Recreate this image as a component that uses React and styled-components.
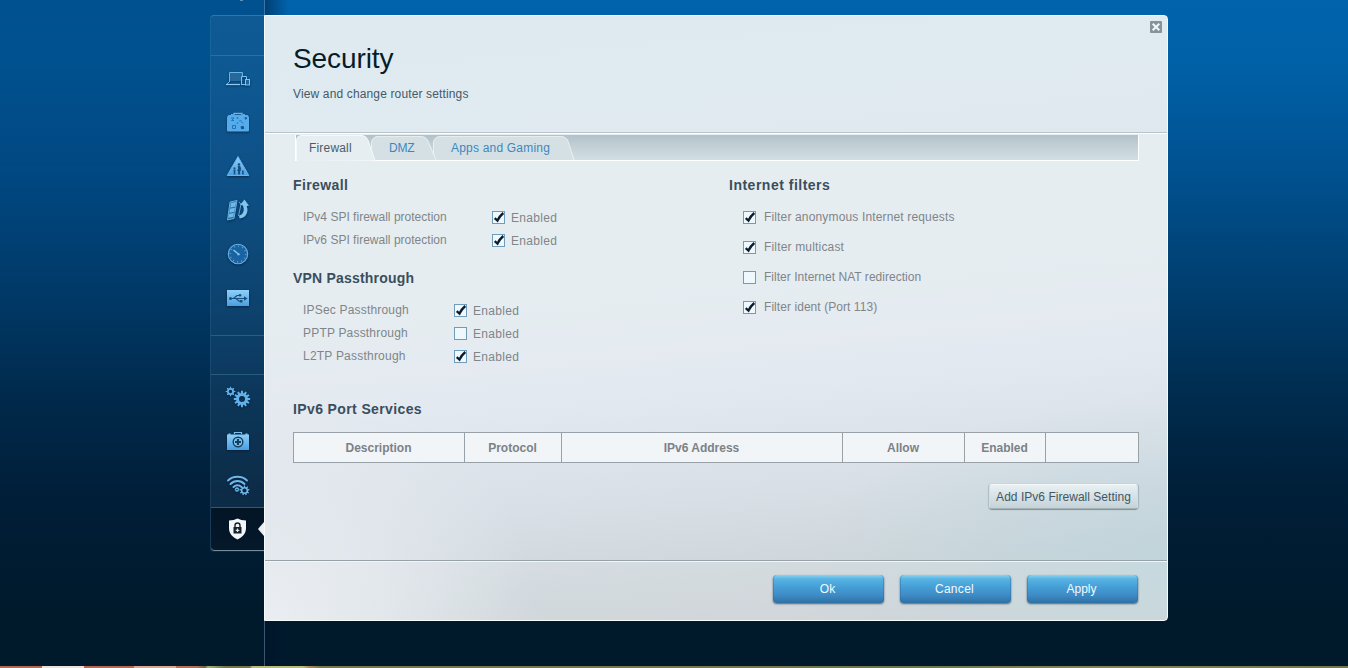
import React from "react";
import styled, { createGlobalStyle } from "styled-components";

const GlobalStyle = createGlobalStyle`
  * { box-sizing: border-box; }
  html, body { margin: 0; padding: 0; overflow: hidden; }
  body { font: 12px/16px "Liberation Sans", Arial, sans-serif; color: #808588; }
  button { font: inherit; padding: 0; margin: 0; }
  h1, h2, p { margin: 0; }
`;

const Page = styled.div`
  width: 1348px;
  height: 668px;
  display: flex;
  flex-direction: column;
  background: linear-gradient(#0063ac 0, #0061a8 60px, #00508e 180px, #003e6e 290px, #002b4d 400px, #001f39 490px, #001a2d 600px, #001a2c 668px);
`;

const Main = styled.div`
  flex: 1;
  display: flex;
  align-items: flex-start;
`;

const LeftRail = styled.aside`
  position: relative;
  flex: none;
  width: 265px;
  height: 666px;
  padding: 15px 0 0 210px;
  border-right: 1px solid rgba(130, 160, 190, 0.45);
  background: linear-gradient(rgba(0, 40, 80, 0.3), rgba(0, 40, 80, 0.22) 180px, rgba(0, 30, 60, 0.12) 400px, rgba(0, 0, 0, 0) 560px);
`;

const Notch = styled.span`
  position: absolute;
  left: 240px;
  top: 0;
  width: 3px;
  height: 1px;
  background: #5a93bd;
`;

const Nav = styled.nav`
  width: 54px;
  height: 537px;
  border-left: 1px solid rgba(120, 170, 210, 0.13);
  border-top: 1px solid rgba(110, 170, 215, 0.4);
  border-radius: 4px 0 0 4px;
  background: linear-gradient(rgba(70, 125, 165, 0.2), rgba(60, 110, 150, 0.2) 350px, rgba(50, 90, 120, 0.22));
`;

const NavBlank = styled.div`
  height: ${(p) => p.$height}px;
`;

const NavGroup = styled.div`
  height: ${(p) => p.$height}px;
  border-top: 1px solid rgba(110, 165, 205, 0.3);
  border-bottom: ${(p) => (p.$ruled ? "1px solid rgba(110, 165, 205, 0.3)" : "0")};
`;

const NavItem = styled.div`
  position: relative;
  height: 44px;
  display: flex;
  align-items: center;
  justify-content: center;
  svg { display: block; filter: drop-shadow(0 1px 1px rgba(0, 15, 35, 0.55)); }
`;

const ActiveItem = styled(NavItem)`
  border-top: 1px solid rgba(130, 160, 180, 0.45);
  border-bottom: 1px solid #7b8c99;
  border-radius: 0 0 0 4px;
  background: linear-gradient(rgba(0, 12, 24, 0.7), rgba(0, 12, 24, 0.55));
`;

const Pointer = styled.span`
  position: absolute;
  right: 0;
  top: 14px;
  border: 7px solid transparent;
  border-left-width: 0;
  border-right: 6px solid #edf1f4;
`;

const Stage = styled.div`
  position: relative;
  flex: 1;
  height: 666px;
  margin-left: -1px;
  padding-top: 15px;
  background: linear-gradient(90deg, transparent 1px, rgba(0, 15, 40, 0.42) 1px, rgba(0, 15, 40, 0) 24px);
`;

const Panel = styled.section`
  width: 904px;
  height: 606px;
  display: flex;
  flex-direction: column;
  border: 1px solid #f8fbfc;
  border-radius: 0 4px 4px 0;
  overflow: hidden;
  background:
    radial-gradient(ellipse 270px 260px at 0 100%, rgba(233, 237, 242, 0.95) 0, rgba(229, 234, 239, 0.75) 45%, rgba(228, 234, 239, 0) 100%),
    radial-gradient(ellipse 360px 170px at 100% 92%, rgba(190, 213, 219, 0.85), rgba(190, 213, 219, 0) 100%),
    linear-gradient(175deg, #e6edf1 0, #e6edf1 45%, #e3e9f0 60%, #d8dfe6 76%, #ced6db 88%, #c9ced2 100%);
`;

const Header = styled.header`
  position: relative;
  height: 118px;
  flex: none;
  padding: 27px 0 0 28px;
  background: linear-gradient(175deg, #dfeaf0, #e0eaf0 70%, #dfe8ee);
  border-bottom: 1px solid #fff;
  box-shadow: inset 0 -1px #b8c3ca;
`;

const Title = styled.h1`
  font-size: 28px;
  line-height: 32px;
  font-weight: 400;
  letter-spacing: -0.1px;
  color: #071c2b;
`;

const Subtitle = styled.p`
  margin-top: 11px;
  color: #455967;
  letter-spacing: 0.14px;
`;

const CloseButton = styled.button`
  position: absolute;
  right: 5px;
  top: 5px;
  width: 12px;
  height: 12px;
  border: 0;
  background: none;
  svg { display: block; }
`;

const Content = styled.div`
  flex: 1;
  padding: 1px 28px 0 28px;
`;

const TabBar = styled.div`
  width: 844px;
  height: 26px;
  margin-left: 2px;
  display: flex;
  border-left: 1px solid #fff;
  border-right: 1px solid #fff;
  border-bottom: 1px solid #fff;
  background: linear-gradient(#b2c1c8, #c4d2d8 50%, #d1dfe4);
`;

const TabButton = styled.button`
  position: relative;
  z-index: ${(p) => p.$z};
  width: ${(p) => p.$width}px;
  height: 26px;
  border: 0;
  background: none;
  text-align: left;
  padding: 0 0 0 ${(p) => p.$pad}px;
  color: ${(p) => (p.$active ? "#4a5c69" : "#3d87bd")};
  letter-spacing: ${(p) => p.$ls}px;
  svg { position: absolute; left: 0; top: 0; z-index: -1; overflow: visible; }
`;

const Columns = styled.div`
  display: grid;
  grid-template-columns: 436px 1fr;
  height: 240px;
  padding-top: 16px;
`;

const SectionTitle = styled.h2`
  height: 16px;
  margin-bottom: ${(p) => p.$gap || 0}px;
  font-size: 14px;
  line-height: 16px;
  font-weight: 700;
  color: #3b4e5b;
  letter-spacing: ${(p) => p.$ls || 0}px;
`;

const Group = styled.div`
  margin-bottom: 19px;
`;

const OptionRow = styled.div`
  height: 23px;
  display: grid;
  grid-template-columns: ${(p) => p.$label}px 1fr;
  align-items: center;
  padding-left: 10px;
`;

const Label = styled.span`
  line-height: 16px;
  letter-spacing: ${(p) => p.$ls || 0}px;
  margin-top: ${(p) => p.$drop || 0}px;
`;

const Check = styled.label`
  display: flex;
  align-items: center;
  gap: ${(p) => p.$gap}px;
  height: ${(p) => p.$height}px;
  padding-left: ${(p) => p.$indent || 0}px;
  padding-top: 1px;
`;

const Box = styled.span`
  width: 13px;
  height: 13px;
  border: 1px solid #6f9cba;
  background: #eff8fd;
  svg { display: block; overflow: visible; }
`;

const Table = styled.div`
  display: grid;
  grid-template-columns: 171px 97px 281px 122px 81px 94px;
  width: 846px;
  height: 31px;
  margin-top: 15px;
  border-bottom: 1px solid #98a1a7;
  border-right: 1px solid #98a1a7;
  background: #f2f5f8;
`;

const Cell = styled.div`
  border-left: 1px solid #98a1a7;
  border-top: 1px solid #98a1a7;
  padding-right: 1px;
  font-weight: 700;
  line-height: 30px;
  text-align: center;
  color: #7c8286;
`;

const AddRow = styled.div`
  display: flex;
  justify-content: flex-end;
  width: 845px;
  margin-top: 21px;
`;

const AddButton = styled.button`
  width: 149px;
  height: 25px;
  border: 1px solid #d5dee2;
  border-top-color: #f4f8f9;
  border-bottom-color: #a4b1b6;
  border-radius: 3px;
  box-shadow: 0 1px 1px rgba(80, 100, 110, 0.6), 1px 0 1px rgba(80, 100, 110, 0.25), -1px 0 1px rgba(80, 100, 110, 0.2);
  background: linear-gradient(#e8f0f2, #c5d3d8);
  color: #435664;
  letter-spacing: 0.03px;
`;

const Footer = styled.footer`
  flex: none;
  height: 60px;
  display: flex;
  justify-content: flex-end;
  gap: 16px;
  padding: 14px 29px 0 0;
  border-top: 1px solid #96a1a8;
  box-shadow: inset 0 1px #f2f6f8;
  background: linear-gradient(90deg, rgba(255, 255, 255, 0.08), rgba(255, 255, 255, 0.12));
`;

const ActionButton = styled.button`
  width: 111px;
  height: 28px;
  padding-right: 2px;
  border: 0;
  border-radius: 4px;
  color: #f1faff;
  letter-spacing: ${(p) => p.$ls || 0}px;
  background: linear-gradient(#8bd3f3 0, #58b4e3 4px, #459ed6 12px, #3e8cc6 20px, #2f70a4 28px);
  box-shadow: 0 1px 2px rgba(40, 60, 75, 0.75), inset 1px 0 rgba(40, 100, 150, 0.35), inset -1px 0 rgba(40, 100, 150, 0.35);
`;

const Strip = styled.div`
  height: 2px;
  flex: none;
  background: linear-gradient(90deg, #b56a55 0 42px, #e9e2dc 42px 84px, #b56a55 84px 134px, #d8a999 134px 176px, #b27158 176px 197px, #65694a 205px, #a6ae78 208px, #73774e 225px 250px, #b5bd7c 252px 303px, #b09058 308px, #77794f 320px 700px, #6d7650 900px, #838459 1100px, #737850);
`;

function Gear({ cx, cy, r, teeth, hole, color }) {
  const step = 360 / teeth;
  return (
    <g transform={`translate(${cx} ${cy})`} fill={color}>
      <circle r={(r + hole) / 2} fill="none" stroke={color} strokeWidth={r - hole} />
      {Array.from({ length: teeth }, (_, i) => (
        <path key={i} d={`M${-r * 0.22} ${-r * 0.8}L${-r * 0.15} ${-r * 1.38}H${r * 0.15}L${r * 0.22} ${-r * 0.8}Z`} transform={`rotate(${i * step})`} />
      ))}
    </g>
  );
}

const Ico = ({ children }) => (
  <svg width="26" height="26" viewBox="0 0 26 26">
    <defs>
      <linearGradient id="ice" x1="0" y1="0" x2="0" y2="1">
        <stop offset="0" stopColor="#8fd0fa" />
        <stop offset="1" stopColor="#4a9fe0" />
      </linearGradient>
    </defs>
    {children}
  </svg>
);

const DevicesIcon = () => (
  <Ico>
    <path d="M4.500 7.500h13V16h-13z" fill="#3a83bb" opacity=".6" />
    <path d="M4.500 17V7.500h13V11M4.500 16.500L1.500 19.500H15" fill="none" stroke="#68b3ea" strokeWidth="1" />
    <path d="M1 19.500h14" stroke="#8ccaf5" strokeWidth="1.200" />
    <path d="M16.500 20V11.500h5V14M16.500 19.500H20" fill="none" stroke="#7cc2f2" />
    <rect x="20.500" y="14.500" width="4" height="5.500" fill="#1f679f" stroke="#7cc2f2" />
  </Ico>
);

const MediaCaseIcon = () => (
  <Ico>
    <path d="M9 6V4.500h8V6" fill="none" stroke="#68b5ee" strokeWidth="1.400" />
    <path d="M2 8l1.500-2H6V5h2v1h10V5h2v1h2.500L24 8v13.500q0 1-1 1H3q-1 0-1-1z" fill="#55acec" />
    <g fill="none" stroke="#2a71ad" strokeWidth="1">
      <path d="M6 9h3l-2.500 2.500H9M7.500 16.500h3v3h-3z" />
      <path d="M14 12l2-.5.5 2 2 .5" opacity=".7" />
    </g>
    <path d="M19.500 8.500l2-.5.5 2-2 .5zM15.500 17.500l3-.8.800 3-3 .5z" fill="#17548c" />
    <circle cx="12.500" cy="9" r=".9" fill="#2f76ae" /><circle cx="12.500" cy="14" r=".8" fill="#2f76ae" />
  </Ico>
);

const ParentalIcon = () => (
  <Ico>
    <path d="M13 3.500L23.800 22.500H2.200z" fill="url(#ice)" stroke="#67b4ee" strokeLinejoin="round" />
    <g fill="#16507f">
      <circle cx="14" cy="11.500" r="1.300" />
      <path d="M12.700 13h2.600l1 3.500h-.9l.7 1.500h-1v3.500h-2V18h-1l1-2.500z" />
      <circle cx="9.500" cy="15.300" r="1.100" />
      <path d="M8 16.700h3l-.7 1V21.500H8.700V18z" />
      <path d="M17 17.500h1.700v4H17.200z" />
    </g>
  </Ico>
);

const PrioritizeIcon = () => (
  <Ico>
    <path d="M5 5.500l7-1.500-3 18-6.500 1.500z" fill="#2a74aa" stroke="#68afdf" strokeWidth="1" transform="translate(0 -.5)" />
    <path d="M6 6.500l5-1-.7 4.500-5 1zM5 12.300l5-1-.7 4-5 1zM4 17.600l5-1-.6 3.700-5 1z" fill="#71b9e8" transform="translate(0 -.5)" />
    <path d="M14 5l2 2.200L13.500 19" fill="none" stroke="#5aa5d8" />
    <path d="M14.500 21.500C21 21 24 15 21.700 9l2.300-.3L19.500 2.500 15 8l2.600.2C20 13 18.500 17.500 14 18.500z" fill="#80c4ef" />
  </Ico>
);

const GaugeIcon = () => (
  <Ico>
    <circle cx="13" cy="13" r="9.700" fill="#1b62a0" stroke="#64b3e8" strokeWidth="1.100" />
    <circle cx="13" cy="13" r="7.800" fill="none" stroke="#6dbaeb" strokeWidth="1.800" strokeDasharray=".9 3.180" opacity=".7" />
    <path d="M8.500 9L14 13.500" stroke="#8bd0f8" strokeWidth="1.200" />
    <circle cx="13.500" cy="13.300" r="1.300" fill="#6dbaeb" />
  </Ico>
);

const UsbIcon = () => (
  <Ico>
    <rect x="2" y="5" width="22" height="16" fill="url(#ice)" />
    <g stroke="#174f7d" strokeWidth="1.200" fill="none">
      <path d="M5 13.500h16M8.500 13.500l3.500-3h3M11 13.500l3 2.700h2.500" />
    </g>
    <path d="M19 11.200L22.500 13.500 19 15.800z" fill="#174f7d" />
    <circle cx="5.500" cy="13.500" r="1.500" fill="#174f7d" />
    <circle cx="15" cy="10.300" r="1.300" fill="#174f7d" />
    <rect x="15" y="15" width="2.500" height="2.500" fill="#174f7d" />
  </Ico>
);

const GearsIcon = () => (
  <Ico>
    <Gear cx={5.500} cy={7.500} r={3.500} teeth={8} hole={1.700} color="#62b1ea" />
    <Gear cx={17} cy={15} r={5.900} teeth={12} hole={3} color="#62b1ea" />
  </Ico>
);

const MedkitIcon = () => (
  <Ico>
    <path d="M9.500 6V4.500h7V6" fill="none" stroke="#79c0f2" strokeWidth="1.200" />
    <path d="M2 6.500h1.500V5.500h2v1h15v-1h2v1H24V22H2z" fill="url(#ice)" />
    <circle cx="13" cy="14" r="4.800" fill="#7cc1f2" stroke="#14405f" strokeWidth="1.400" />
    <path d="M13 11v6M10 14h6" stroke="#14405f" strokeWidth="2.200" />
  </Ico>
);

const WifiIcon = () => (
  <Ico>
    <g fill="none" stroke="#6db9ee" strokeWidth="1.900" strokeLinecap="round">
      <path d="M3 8.500C8 3.500 17 3.500 22 8.500" />
      <path d="M5.500 12C9.500 8 15.500 8 19.500 12" />
      <path d="M8.500 15C11 12.800 14 12.800 16.500 15" />
    </g>
    <Gear cx={12} cy={17.500} r={1.900} teeth={7} hole={0.8} color="#6db9ee" />
    <Gear cx={19.500} cy={18.500} r={3.600} teeth={9} hole={2.100} color="#6db9ee" />
  </Ico>
);

const ShieldIcon = () => (
  <Ico>
    <path d="M4 4.500q5 0 8.500-2 3.500 2 8.500 2V12c0 6-3.500 9-8.500 11.500C7.500 21 4 18 4 12z" fill="#f4f7f9" />
    <path d="M10 12V9.500a2.500 2.500 0 015 0V12" fill="none" stroke="#14222e" strokeWidth="1.400" />
    <rect x="8.500" y="11" width="8" height="6.500" fill="#14222e" />
    <path d="M12.500 12.500V16M10.700 14.300h3.600" stroke="#dfe6ea" strokeWidth="1.200" />
  </Ico>
);

const CheckBox = ({ on }) => (
  <Box>
    <svg width="11" height="11" viewBox="0 0 11 11">
      {on && <path d="M1.700 6.200L4.500 8.600Q6.500 4.200 10.300 1" fill="none" stroke="#0b1c2e" strokeWidth="2.300" />}
    </svg>
  </Box>
);

function Tab({ label, width, pad, active, z, ls, shape, fill }) {
  return (
    <TabButton $width={width} $pad={pad} $active={active} $z={z} $ls={ls}>
      <svg width={width} height="26">
        <path d={shape} fill={fill} stroke="none" />
        <path d={shape} fill="none" stroke="#f4f9fb" strokeWidth="1" opacity={active ? 1 : 0.7} />
      </svg>
      {label}
    </TabButton>
  );
}

const Option = ({ label, labelWidth, ls, on }) => (
  <OptionRow $label={labelWidth}>
    <Label $ls={ls}>{label}</Label>
    <Check $gap={6} $height={23}>
      <CheckBox on={on} />
      <Label $ls={0.3} $drop={2}>Enabled</Label>
    </Check>
  </OptionRow>
);

const filters = [
  ["Filter anonymous Internet requests", true, 0.15],
  ["Filter multicast", true, 0.17],
  ["Filter Internet NAT redirection", false, 0.03],
  ["Filter ident (Port 113)", true, 0.06],
];

export default function App() {
  return (
    <Page>
      <GlobalStyle />
      <Main>
        <LeftRail>
          <Notch />
          <Nav>
            <NavBlank $height={39} />
            <NavGroup $height={281} $ruled>
              {[DevicesIcon, MediaCaseIcon, ParentalIcon, PrioritizeIcon, GaugeIcon, UsbIcon].map((Icon, i) => (
                <NavItem key={i}><Icon /></NavItem>
              ))}
            </NavGroup>
            <NavBlank $height={38} />
            <NavGroup $height={133}>
              {[GearsIcon, MedkitIcon, WifiIcon].map((Icon, i) => (
                <NavItem key={i}><Icon /></NavItem>
              ))}
            </NavGroup>
            <ActiveItem>
              <ShieldIcon />
              <Pointer />
            </ActiveItem>
          </Nav>
        </LeftRail>
        <Stage>
          <Panel>
            <Header>
              <Title>Security</Title>
              <Subtitle>View and change router settings</Subtitle>
              <CloseButton aria-label="Close">
                <svg width="12" height="12" viewBox="0 0 12 12">
                  <rect width="12" height="12" rx="1" fill="#86939d" />
                  <path d="M2.700 2.700l6.600 6.600M9.300 2.700l-6.600 6.600" stroke="#f4f7f9" strokeWidth="2" />
                </svg>
              </CloseButton>
            </Header>
            <Content>
              <TabBar>
                <Tab label="Firewall" width={75} pad={13} active z={3} ls={0.18}
                  shape="M.5 26V6Q.5 .5 6 .5H66Q70 .5 72 5L79 25.500" fill="#e6eef2" />
                <Tab label="DMZ" width={62} pad={18} z={2} ls={-0.2}
                  shape="M.5 25V7Q1.500 1.500 7 1.500H50Q55 1.500 57 6L65 25" fill="#d5e0e5" />
                <Tab label="Apps and Gaming" width={140} pad={18} z={1} ls={0.2}
                  shape="M.5 25V7Q1.500 1.500 7 1.500H128Q133 1.500 135 6L141 25" fill="#d5e0e5" />
              </TabBar>
              <Columns>
                <div>
                  <Group>
                    <SectionTitle $gap={12} $ls={0.38}>Firewall</SectionTitle>
                    <Option label="IPv4 SPI firewall protection" labelWidth={189} ls={0.01} on />
                    <Option label="IPv6 SPI firewall protection" labelWidth={189} ls={0.01} on />
                  </Group>
                  <Group>
                    <SectionTitle $gap={12} $ls={0.2}>VPN Passthrough</SectionTitle>
                    <Option label="IPSec Passthrough" labelWidth={151} ls={0.19} on />
                    <Option label="PPTP Passthrough" labelWidth={151} ls={0.19} />
                    <Option label="L2TP Passthrough" labelWidth={151} ls={0.22} on />
                  </Group>
                </div>
                <div>
                  <SectionTitle $gap={9} $ls={0.5}>Internet filters</SectionTitle>
                  {filters.map(([text, on, ls]) => (
                    <Check key={text} $gap={8} $height={30} $indent={14}>
                      <CheckBox on={on} />
                      <Label $ls={ls} $drop={-2}>{text}</Label>
                    </Check>
                  ))}
                </div>
              </Columns>
              <SectionTitle $ls={0.38}>IPv6 Port Services</SectionTitle>
              <Table>
                {["Description", "Protocol", "IPv6 Address", "Allow", "Enabled", ""].map((t, i) => (
                  <Cell key={i}>{t}</Cell>
                ))}
              </Table>
              <AddRow>
                <AddButton>Add IPv6 Firewall Setting</AddButton>
              </AddRow>
            </Content>
            <Footer>
              <ActionButton>Ok</ActionButton>
              <ActionButton $ls={0.3}>Cancel</ActionButton>
              <ActionButton>Apply</ActionButton>
            </Footer>
          </Panel>
        </Stage>
      </Main>
      <Strip />
    </Page>
  );
}
